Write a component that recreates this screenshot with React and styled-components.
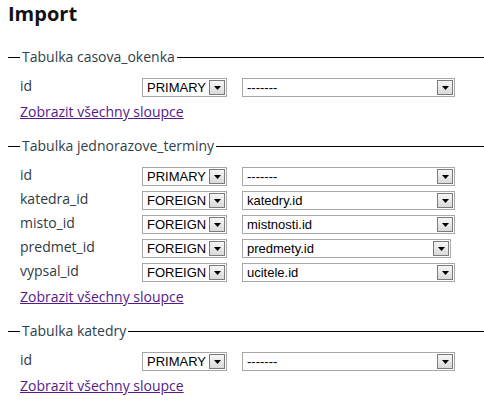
import React from "react";
import styled, { createGlobalStyle } from "styled-components";

const Global = createGlobalStyle`
  html, body { margin: 0; padding: 0; background: #fff; }
  body { font-family: "Open Sans", "Noto Sans", sans-serif; }
`;

const Page = styled.div`
  padding: 0 0 0 8px;
  color: #2f3a44;
`;

const Title = styled.h1`
  margin: 0;
  font-size: 20px;
  line-height: 27px;
  font-weight: 700;
  color: #111;
`;

const Section = styled.fieldset`
  margin: ${(p) => (p.$first ? "21px" : "0")} 0 8px 0;
  padding: 10px 0 7px 12px;
  border: 0;
  border-top: 1px solid #000;
  min-inline-size: 0;
`;

const Legend = styled.legend`
  padding: 0 2px;
  font-size: 14px;
  line-height: 18px;
  color: #2f3f4c;
`;

const Grid = styled.div`
  display: grid;
  grid-template-columns: 107px auto auto;
  column-gap: 15px;
  grid-auto-rows: 24px;
  align-items: start;
  justify-content: start;
`;

const Label = styled.div`
  font-size: 14px;
  line-height: 20px;
  color: #2f3a44;
`;

const SelectBox = styled.div`
  box-sizing: border-box;
  margin-top: 2px;
  width: ${(p) => p.$w}px;
  height: 19px;
  display: flex;
  align-items: center;
  border: 1px solid #a7a7a7;
  background: #fff;
  font-family: "Liberation Sans", Arial, sans-serif;
  font-size: 13px;
  color: #000;
`;

const Value = styled.span`
  flex: 1;
  min-width: 0;
  padding-left: 4px;
  white-space: nowrap;
  overflow: hidden;
  line-height: 17px;
`;

const DropButton = styled.span`
  box-sizing: border-box;
  flex: 0 0 16px;
  width: 16px;
  height: 15px;
  margin-right: 1px;
  display: flex;
  align-items: center;
  justify-content: center;
  border: 1px solid #7a7a7a;
  background: linear-gradient(#f6f6f6, #dadada);
`;

const Link = styled.a`
  display: inline-block;
  margin-top: 3px;
  font-size: 14px;
  line-height: 18px;
  color: #551a8b;
  text-decoration: underline;
  cursor: pointer;
`;

function Arrow() {
  return (
    <svg width="7" height="4" viewBox="0 0 7 4">
      <path d="M0 0h7L3.5 4z" fill="#000" />
    </svg>
  );
}

function Select({ value, width }) {
  return (
    <SelectBox $w={width}>
      <Value>{value}</Value>
      <DropButton>
        <Arrow />
      </DropButton>
    </SelectBox>
  );
}

const sections = [
  {
    name: "Tabulka casova_okenka",
    rows: [{ col: "id", key: "PRIMARY", ref: "-------", w: 213 }],
  },
  {
    name: "Tabulka jednorazove_terminy",
    rows: [
      { col: "id", key: "PRIMARY", ref: "-------", w: 213 },
      { col: "katedra_id", key: "FOREIGN", ref: "katedry.id", w: 213 },
      { col: "misto_id", key: "FOREIGN", ref: "mistnosti.id", w: 213 },
      { col: "predmet_id", key: "FOREIGN", ref: "predmety.id", w: 209 },
      { col: "vypsal_id", key: "FOREIGN", ref: "ucitele.id", w: 213 },
    ],
  },
  {
    name: "Tabulka katedry",
    rows: [{ col: "id", key: "PRIMARY", ref: "-------", w: 213 }],
  },
];

export default function App() {
  return (
    <Page>
      <Global />
      <Title>Import</Title>
      {sections.map((s, i) => (
        <Section key={s.name} $first={i === 0}>
          <Legend>{s.name}</Legend>
          <Grid>
            {s.rows.map((r) => (
              <React.Fragment key={r.col}>
                <Label>{r.col}</Label>
                <Select value={r.key} width={85} />
                <Select value={r.ref} width={r.w} />
              </React.Fragment>
            ))}
          </Grid>
          <Link>Zobrazit všechny sloupce</Link>
        </Section>
      ))}
    </Page>
  );
}
